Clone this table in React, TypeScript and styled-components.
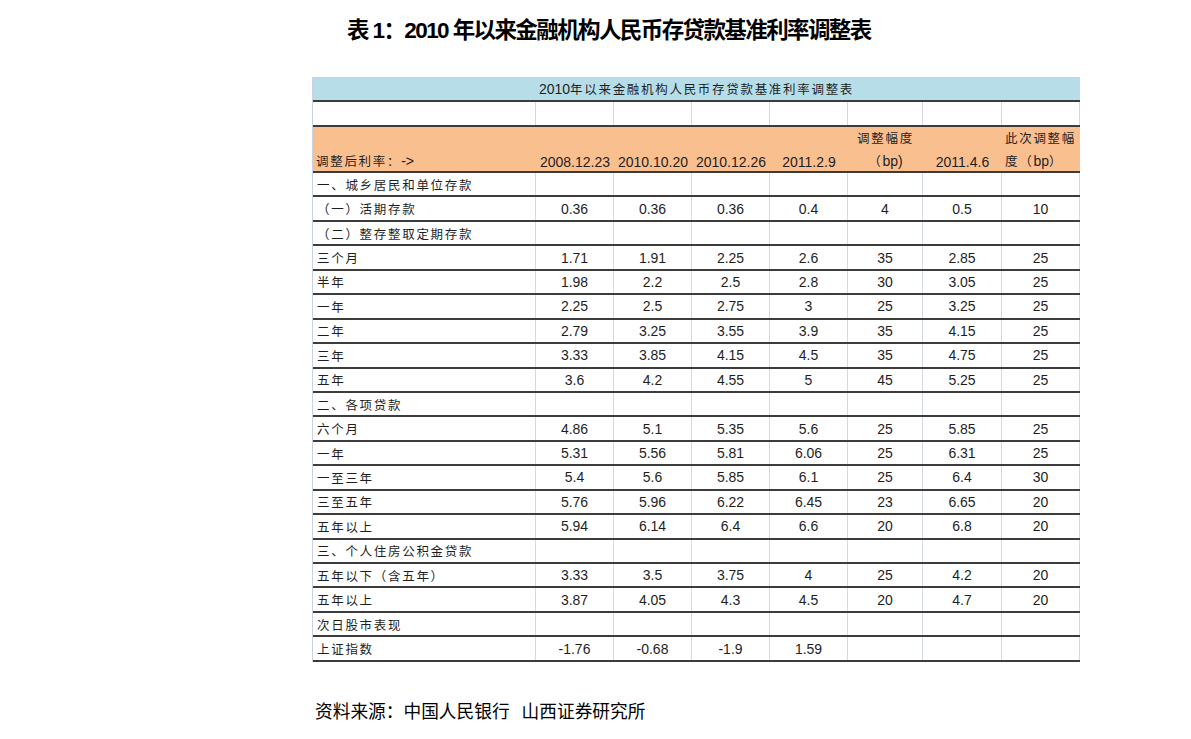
import * as React from 'react';
import styled, { createGlobalStyle } from 'styled-components';

const COLS = '223px 78px 78px 78px 78px 75px 79px 78px';
const FONT = '"Liberation Sans", "Noto Sans CJK SC", sans-serif';

type Row = { label: string; values?: string[] };

const rows: Row[] = [
	{ label: '一、城乡居民和单位存款' },
	{ label: '（一）活期存款', values: ['0.36', '0.36', '0.36', '0.4', '4', '0.5', '10'] },
	{ label: '（二）整存整取定期存款' },
	{ label: '三个月', values: ['1.71', '1.91', '2.25', '2.6', '35', '2.85', '25'] },
	{ label: '半年', values: ['1.98', '2.2', '2.5', '2.8', '30', '3.05', '25'] },
	{ label: '一年', values: ['2.25', '2.5', '2.75', '3', '25', '3.25', '25'] },
	{ label: '二年', values: ['2.79', '3.25', '3.55', '3.9', '35', '4.15', '25'] },
	{ label: '三年', values: ['3.33', '3.85', '4.15', '4.5', '35', '4.75', '25'] },
	{ label: '五年', values: ['3.6', '4.2', '4.55', '5', '45', '5.25', '25'] },
	{ label: '二、各项贷款' },
	{ label: '六个月', values: ['4.86', '5.1', '5.35', '5.6', '25', '5.85', '25'] },
	{ label: '一年', values: ['5.31', '5.56', '5.81', '6.06', '25', '6.31', '25'] },
	{ label: '一至三年', values: ['5.4', '5.6', '5.85', '6.1', '25', '6.4', '30'] },
	{ label: '三至五年', values: ['5.76', '5.96', '6.22', '6.45', '23', '6.65', '20'] },
	{ label: '五年以上', values: ['5.94', '6.14', '6.4', '6.6', '20', '6.8', '20'] },
	{ label: '三、个人住房公积金贷款' },
	{ label: '五年以下（含五年）', values: ['3.33', '3.5', '3.75', '4', '25', '4.2', '20'] },
	{ label: '五年以上', values: ['3.87', '4.05', '4.3', '4.5', '20', '4.7', '20'] },
	{ label: '次日股市表现' },
	{ label: '上证指数', values: ['-1.76', '-0.68', '-1.9', '1.59', '', '', ''] },
];

const empty = ['', '', '', '', '', '', ''];

export default function App() {
	return (
		<>
			<GlobalStyle />
			<Page>
				<Title>表 1：2010 年以来金融机构人民币存贷款基准利率调整表</Title>
				<Sheet>
					<CaptionRow>2010<Han>年以来金融机构人民币存贷款基准利率调整表</Han></CaptionRow>
					<BlankRow>
						<LabelCell />
						{ empty.map((_, i) => <Cell key={ i } />) }
					</BlankRow>
					<HeaderRow>
						<HeaderCell $align="left"><Lines><Han>调整后利率：</Han>-&gt;</Lines></HeaderCell>
						<HeaderCell><Lines>2008.12.23</Lines></HeaderCell>
						<HeaderCell><Lines>2010.10.20</Lines></HeaderCell>
						<HeaderCell><Lines>2010.12.26</Lines></HeaderCell>
						<HeaderCell><Lines>2011.2.9</Lines></HeaderCell>
						<HeaderCell><Lines><Han>调整幅度</Han><br /><Han>（</Han>bp)</Lines></HeaderCell>
						<HeaderCell><Lines>2011.4.6</Lines></HeaderCell>
						<HeaderCell $align="left"><Lines><Han>此次调整幅</Han><br /><Han>度（</Han>bp<Han>）</Han></Lines></HeaderCell>
					</HeaderRow>
					{ rows.map((row, r) => (
						<DataRow key={ r }>
							<LabelCell><Han>{ row.label }</Han></LabelCell>
							{ (row.values || empty).map((v, i) => <Cell key={ i }>{ v }</Cell>) }
						</DataRow>
					)) }
				</Sheet>
				<Source>资料来源：中国人民银行<Gap />山西证券研究所</Source>
			</Page>
		</>
	);
}

const GlobalStyle = createGlobalStyle`
	body {
		margin: 0;
		background: #fff;
		font-family: ${FONT};
	}
`;

const Page = styled.div`
	display: flex;
	flex-direction: column;
	padding: 16px 0 0 312px;
	width: 768px;
`;

const Title = styled.h1`
	margin: 0 0 31px;
	padding-left: 35px;
	font-size: 22.5px;
	letter-spacing: -1.6px;
	line-height: 30px;
	font-weight: bold;
	color: #000;
	white-space: nowrap;
`;

// chinese runs in the sheet are drawn smaller and spaced out, like the excel export
const Han = styled.span`
	font-size: 12.5px;
	letter-spacing: 1.7px;
`;

const Sheet = styled.div`
	display: flex;
	flex-direction: column;
	border-left: 1px solid #c9d2e0;
	font-size: 14px;
	color: #1e1e1e;
`;

const RowBase = styled.div`
	display: grid;
	grid-template-columns: ${COLS};
	box-sizing: border-box;
	border-bottom: 2px solid #3c3c3c;
`;

const CaptionRow = styled.div`
	box-sizing: border-box;
	height: 25px;
	display: flex;
	align-items: center;
	justify-content: center;
	background: #b7dee8;
	border-bottom: 2px solid #3c3c3c;
	white-space: nowrap;
`;

const BlankRow = styled(RowBase)`
	height: 25px;
`;

const HeaderRow = styled(RowBase)`
	height: 46px;
	background: #fabf8f;
`;

const HeaderCell = styled.div<{ $align?: 'left' | 'center' }>`
	display: flex;
	align-items: flex-end;
	justify-content: ${p => p.$align === 'left' ? 'flex-start' : 'center'};
	text-align: ${p => p.$align === 'left' ? 'left' : 'center'};
	padding: 0 0 0 ${p => p.$align === 'left' ? '3px' : '0'};
`;

const Lines = styled.div`
	line-height: 22px;
	white-space: nowrap;
`;

const DataRow = styled(RowBase)`
	height: 24.45px;
`;

const Cell = styled.div`
	display: flex;
	align-items: center;
	justify-content: center;
	border-right: 1px solid #d3dae6;
	white-space: nowrap;
`;

const LabelCell = styled(Cell)`
	justify-content: flex-start;
	padding-left: 4px;
`;

const Source = styled.div`
	display: flex;
	margin-top: 38px;
	padding-left: 3px;
	font-size: 17.7px;
	line-height: 24px;
	color: #000;
	white-space: nowrap;
`;

const Gap = styled.span`
	width: 12px;
`;
